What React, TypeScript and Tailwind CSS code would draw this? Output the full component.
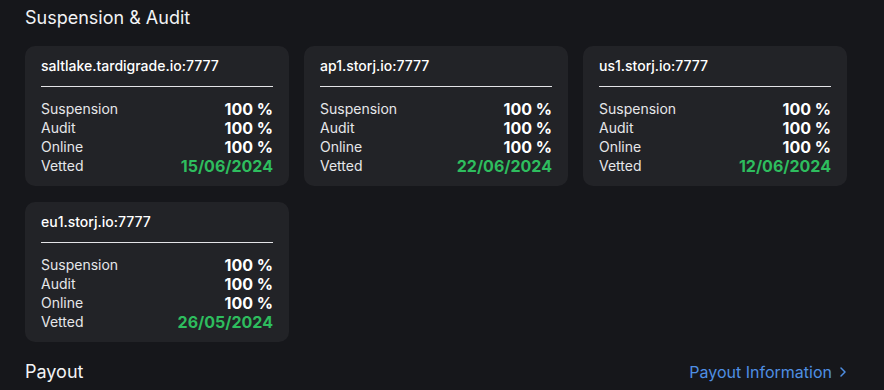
import React from "react";

interface Satellite {
  host: string;
  suspension: string;
  audit: string;
  online: string;
  vetted: string;
}

const SATELLITES: Satellite[] = [
  { host: "saltlake.tardigrade.io:7777", suspension: "100 %", audit: "100 %", online: "100 %", vetted: "15/06/2024" },
  { host: "ap1.storj.io:7777", suspension: "100 %", audit: "100 %", online: "100 %", vetted: "22/06/2024" },
  { host: "us1.storj.io:7777", suspension: "100 %", audit: "100 %", online: "100 %", vetted: "12/06/2024" },
  { host: "eu1.storj.io:7777", suspension: "100 %", audit: "100 %", online: "100 %", vetted: "26/05/2024" },
];

function Row({ label, value, green }: { label: string; value: string; green?: boolean }) {
  return (
    <div className="flex items-center justify-between h-[19px]">
      <span className="text-[14px] text-[#e6e7ea]">{label}</span>
      <span className={`text-[16px] font-bold ${green ? "text-[#2ebd5e]" : "text-white"}`}>{value}</span>
    </div>
  );
}

function SatelliteCard({ sat }: { sat: Satellite }) {
  return (
    <div className="bg-[#222327] rounded-[10px] px-4 pt-[11px] pb-[11px] h-[140px]">
      <div className="text-[14px] font-medium text-white leading-[18px]">{sat.host}</div>
      <div className="h-px bg-[#e4e4e7] mt-[11px] mb-[12px]" />
      <Row label="Suspension" value={sat.suspension} />
      <Row label="Audit" value={sat.audit} />
      <Row label="Online" value={sat.online} />
      <Row label="Vetted" value={sat.vetted} green />
    </div>
  );
}

export default function App() {
  return (
    <div className="w-[884px] h-[390px] bg-[#16171b] overflow-hidden font-['Inter',sans-serif] text-white">
      <div className="px-[25px] pt-[5px]">
        <h2 className="text-[18px] leading-[26px] text-[#f2f3f5]">Suspension &amp; Audit</h2>

        {/* satellite cards */}
        <div className="grid grid-cols-3 gap-x-[15px] gap-y-[16px] w-[822px] mt-[15px]">
          {SATELLITES.map((s) => (
            <SatelliteCard key={s.host} sat={s} />
          ))}
        </div>

        <div className="flex items-center justify-between w-[822px] mt-[17px]">
          <span className="text-[18px] leading-[26px] text-[#f2f3f5]">Payout</span>
          <span className="flex items-center gap-[7px] text-[16px] text-[#4f8fe3]">
            Payout Information
            <svg width="8" height="12" viewBox="0 0 8 12" fill="none">
              <path d="M2 2l4 4-4 4" stroke="#4f8fe3" strokeWidth="1.5" strokeLinecap="round" strokeLinejoin="round" />
            </svg>
          </span>
        </div>
      </div>
    </div>
  );
}
